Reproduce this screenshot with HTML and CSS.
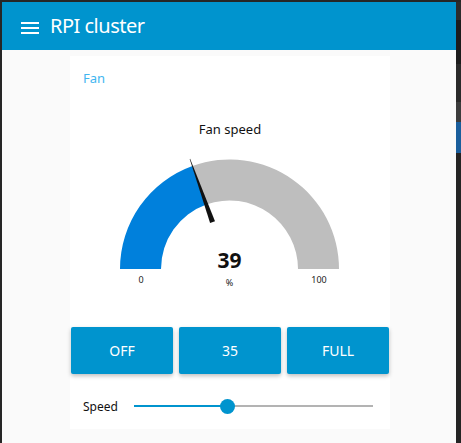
FILE: index.html
```html
<!DOCTYPE html>
<html>
<head>
<meta charset="utf-8">
<link rel="stylesheet" href="styles.css">
</head>
<body>
<div class="frame">
  <div class="app">
    <header class="toolbar">
      <span class="burger"><i></i><i></i><i></i></span>
      <span class="title">RPI cluster</span>
    </header>
    <main class="content">
      <section class="card">
        <div class="group-title">Fan</div>
        <div class="gauge">
          <div class="gauge-title">Fan speed</div>
          <svg class="gauge-svg" width="320" height="189" viewBox="0 0 320 189">
            <path d="M50 131 A109.5 109.5 0 0 1 122.41 27.97 L136.30 66.55 A68.5 68.5 0 0 0 91 131 Z" fill="#0080dc"/>
            <path d="M122.41 27.97 A109.5 109.5 0 0 1 269 131 L228 131 A68.5 68.5 0 0 0 136.30 66.55 Z" fill="#bebebe"/>
            <polygon points="145.0,83.2 140.1,84.9 119.7,20.9 120.1,20.8" fill="#111"/>
            <text x="159.5" y="130" class="g-val">39</text>
            <text x="159.5" y="148" class="g-small">%</text>
            <text x="71" y="145" class="g-small">0</text>
            <text x="249" y="145" class="g-small">100</text>
          </svg>
        </div>
        <div class="buttons">
          <button class="btn">OFF</button>
          <button class="btn">35</button>
          <button class="btn">FULL</button>
        </div>
        <div class="slider-row">
          <span class="slider-label">Speed</span>
          <div class="slider">
            <div class="track"><div class="fill" style="width:93px"></div></div>
            <div class="thumb" style="left:93px"></div>
          </div>
        </div>
      </section>
    </main>
  </div>
  <div class="sidebar">
    <div class="seg s1"></div>
    <div class="seg s2"></div>
    <div class="seg s3"></div>
    <div class="seg s4"></div>
    <div class="seg s5"></div>
  </div>
</div>
</body>
</html>
```

FILE: styles.css
```css
* { box-sizing: border-box; }
html, body { margin: 0; padding: 0; }
body {
  width: 461px;
  height: 443px;
  overflow: hidden;
  background: #262626;
  font-family: "Noto Sans", "Open Sans", sans-serif;
}
.frame {
  display: flex;
  height: 443px;
  padding: 2px 0 0 2px;
}
.app {
  width: 454px;
  display: flex;
  flex-direction: column;
  background: #fafafa;
}
.toolbar {
  height: 48px;
  background: #0094ce;
  display: flex;
  align-items: center;
  color: #fff;
  padding-left: 19px;
}
.burger {
  display: flex;
  flex-direction: column;
  gap: 3px;
  width: 18px;
  margin-right: 11px;
  margin-top: 3px;
}
.burger i {
  display: block;
  height: 2px;
  background: #fff;
}
.title {
  font-size: 20px;
  line-height: 24px;
  letter-spacing: -0.5px;
}
.content {
  flex: 1;
  padding: 6px 0 0 68px;
}
.card {
  width: 320px;
  background: #fff;
  padding: 0 1px 11px;
}
.group-title {
  height: 44px;
  padding: 12px 0 0 12px;
  font-size: 13px;
  line-height: 20px;
  color: #3fb6f0;
}
.gauge-title {
  padding-top: 20px;
  height: 38px;
  text-align: center;
  font-size: 13px;
  line-height: 18px;
  color: #111;
}
.gauge-svg {
  display: block;
  margin-left: -1px;
}
.g-val {
  font-family: "Noto Sans", sans-serif;
  font-weight: bold;
  font-size: 21px;
  text-anchor: middle;
  fill: #111;
}
.g-small {
  font-family: "Noto Sans", sans-serif;
  font-size: 9px;
  text-anchor: middle;
  fill: #222;
}
.buttons {
  display: flex;
  gap: 6px;
}
.btn {
  width: 102px;
  height: 47px;
  border: none;
  border-radius: 2px;
  background: #0094ce;
  color: #fff;
  font-family: "Noto Sans", "Open Sans", sans-serif;
  font-size: 14px;
  box-shadow: 0 2px 4px rgba(0,0,0,0.26);
  padding: 0;
}
.slider-row {
  display: flex;
  align-items: center;
  height: 24px;
  margin-top: 20px;
  padding-left: 12px;
}
.slider-label {
  width: 51px;
  font-size: 12px;
  color: #111;
}
.slider {
  position: relative;
  width: 239px;
  height: 15px;
  display: flex;
  align-items: center;
}
.track {
  width: 100%;
  height: 2px;
  background: #b3b3b3;
}
.fill {
  height: 2px;
  background: #0094ce;
}
.thumb {
  position: absolute;
  top: 0;
  width: 15px;
  height: 15px;
  margin-left: -7px;
  border-radius: 50%;
  background: #0094ce;
}
.sidebar {
  width: 5px;
  display: flex;
  flex-direction: column;
  background: #242424;
}
.seg { width: 5px; }
.s1 { height: 18px; background: #2c2c2c; }
.s2 { height: 44px; background: #1c1c1c; }
.s3 { height: 38px; background: #2a2a2a; }
.s4 { height: 20px; background: #3c3c3c; }
.s5 { height: 31px; background: #1a5e9c; }
```
